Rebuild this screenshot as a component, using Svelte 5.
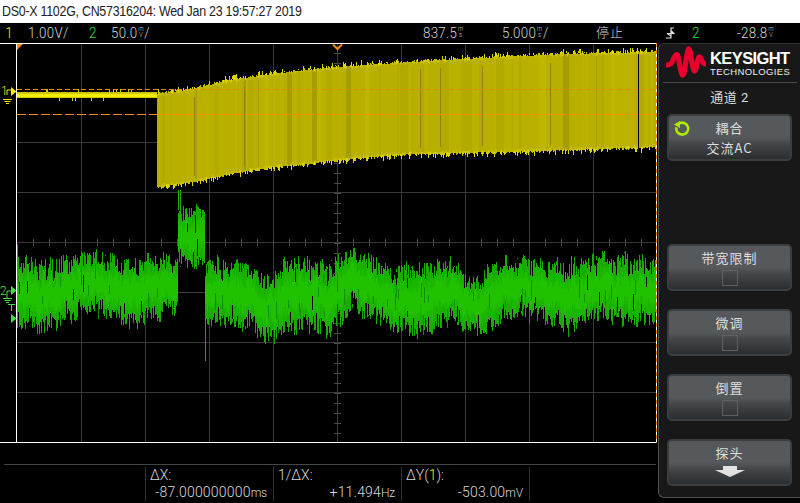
<script>
  function rng(seed) {
    let a = seed;
    return () => {
      a |= 0; a = (a + 0x6d2b79f5) | 0;
      let t = Math.imul(a ^ (a >>> 15), 1 | a);
      t = (t + Math.imul(t ^ (t >>> 7), 61 | t)) ^ t;
      return ((t ^ (t >>> 14)) >>> 0) / 4294967296;
    };
  }
  function interp(tbl, x) {
    for (let i = 1; i < tbl.length; i++) {
      if (x <= tbl[i][0]) {
        const [a, b] = tbl[i - 1], [c, d] = tbl[i];
        return b + ((d - b) * (x - a)) / (c - a);
      }
    }
    return tbl[tbl.length - 1][1];
  }
  const OFFSET = 43; // svg origin in page coordinates
  const seg = (x, y1, y2) => `M${x + 0.5} ${Math.round(y1) - OFFSET}V${Math.round(y2) - OFFSET}`;

  // ---- channel 1 (yellow burst) ----
  const yTop = [[157,92],[193,87],[230,78],[273,72],[307,68],[337,65],[383,62],[410,60],[500,55],[567,52],[657,50]];
  const yBot = [[157,188],[193,183],[230,175],[273,168],[307,165],[337,161],[383,157],[410,155],[500,153],[567,151],[657,148]];
  const r1 = rng(1234);
  const yShades = ['#b8af00', '#bbb200', '#b3aa00', '#bfb600', '#a69e00'];
  const yBuckets = yShades.map(() => '');
  let yEdge = '', yBright = '', yDark = '', yFlat = '', yFringe = '';
  let shade = 0;
  for (let x = 157; x < 657; x++) {
    if (r1() < 0.35) { const p = r1(); shade = p < 0.42 ? 0 : p < 0.68 ? 1 : p < 0.86 ? 2 : p < 0.96 ? 3 : 4; }
    const t = interp(yTop, x) + 2, b = interp(yBot, x) - 1;
    yBuckets[shade] += seg(x, t, b);
    if (r1() < 0.55) yEdge += seg(x, t - r1() * 2, t + 1 + r1() * 2);
    if (r1() < 0.55) yEdge += seg(x, b - 1 - r1() * 2, b + r1() * 2);
    if (r1() < 0.28) yBright += seg(x, t - 1 - r1() * 4, t - 1 + r1() * 3);
    if (r1() < 0.28) yBright += seg(x, b - r1() * 2, b + 1 + r1() * 4);
    if (r1() < 0.012) yDark += seg(x, t + 8, b - 6);
  }
  for (let x = 17; x < 157; x++) {
    const up = r1() < 0.07 ? 3 : 0, dn = r1() < 0.08 ? 3 : 0;
    yFringe += seg(x, 92 - up, 98 + dn);
    yFlat += seg(x, 94, 97);
  }
  const yGap = seg(638, 54, 148);

  // ---- channel 2 (green noise) ----
  const gTop = [[17,258],[45,262],[90,252],[130,262],[150,258],[178,258],[205,262],[250,262],[265,280],[290,258],[310,260],[330,265],[350,250],[370,255],[390,270],[420,265],[450,260],[470,280],[500,260],[520,258],[560,265],[600,255],[620,258],[657,260]];
  const gBot = [[17,324],[45,332],[90,310],[130,326],[150,318],[178,312],[205,322],[250,328],[265,343],[290,330],[310,330],[330,335],[350,310],[370,318],[390,330],[420,335],[450,320],[470,330],[480,338],[500,320],[520,315],[560,325],[570,335],[600,315],[620,325],[657,320]];
  const r2 = rng(77);
  let gOuter = '', gMid = '', gIn = '', gDeep = '', gCut = '';
  for (let x = 17; x < 657; x++) {
    const pulse = x >= 178 && x < 205;
    const wob = Math.sin(x * 0.37) * 2.5 + Math.sin(x * 0.83 + 1) * 2;
    const t = (pulse ? 204 : interp(gTop, x) - 3) + wob;
    const b = (pulse ? 270 : interp(gBot, x) + 3) + wob;
    const h = b - t;
    const tt = t + Math.pow(r2(), 1.6) * h * 0.34;
    const bb = b - Math.pow(r2(), 1.6) * h * 0.34;
    gOuter += seg(x, tt, bb);
    gMid += seg(x, t + h * (0.14 + r2() * 0.16), b - h * (0.14 + r2() * 0.16));
    gIn += seg(x, t + h * (0.26 + r2() * 0.14), b - h * (0.26 + r2() * 0.14));
    if (r2() < 0.07) { const y = t + h * (0.2 + r2() * 0.6); gDeep += seg(x, y, y + 6 + r2() * 14); }
    if (r2() < 0.035) { const y = tt + r2() * 4; gCut += seg(x, y, y + 6 + r2() * 12); }
    if (r2() < 0.035) { const y = bb - r2() * 4; gCut += seg(x, y - 6 - r2() * 12, y); }
  }
  gOuter += seg(178, 190, 210) + seg(180, 190, 210) + seg(205, 300, 361) + seg(17, 244, 262);

  // ---- graticule ----
  let grid = '', ticks = '';
  for (let x = 81; x < 657; x += 64) grid += `M${x + 0.5} 1V399`;
  for (let y = 92; y < 440; y += 50) grid += `M17 ${y - 43 + 0.5}H657`;
  for (let x = 33; x < 657; x += 16) ticks += `M${x + 0.5} ${242 - 43 - 3}V${242 - 43 + 4}`;
  for (let y = 53; y < 442; y += 10) ticks += `M334 ${y - 43 + 0.5}H341`;

  const softkeys = [
    { label: '带宽限制', kind: 'box' },
    { label: '微调', kind: 'box' },
    { label: '倒置', kind: 'box' },
    { label: '探头', kind: 'arrow' }
  ];
  const meas = [
    { head: ['ΔX:'], val: '-87.000000000', unit: 'ms' },
    { head: ['1/ΔX:'], val: '+11.494', unit: 'Hz' },
    { head: ['ΔY(', '1', '):'], val: '-503.00', unit: 'mV' }
  ];
</script>

<div class="screen">
  <header class="title"><span>DS0-X 1102G, CN57316204: Wed Jan 23 19:57:27 2019</span></header>

  <div class="status">
    <span class="cell sq yellow w-ch">1</span>
    <span class="cell sq w-scale">1.00V/</span>
    <span class="cell sq green w-ch2">2</span>
    <span class="cell sq w-scale2">50.0<span class="stack"><i>m</i><i>V</i></span>/</span>
    <span class="cell sq w-delay">837.5<span class="stack"><i>m</i><i>s</i></span></span>
    <span class="cell sq w-time">5.000<span class="stack"><i>m</i><i>s</i></span>/</span>
    <span class="cell w-run">停止</span>
    <span class="cell w-trig">
      <svg width="10" height="12" viewBox="0 0 10 12"><path d="M6 0.5V11.5M1 11H6M6 1H9M2 6.5H9L6 3.5M2 6.5L6 9" fill="none" stroke="#e0e0e0" stroke-width="1.2"/></svg>
    </span>
    <span class="cell sq green w-src">2</span>
    <span class="cell sq w-level">-28.8<span class="stack"><i>m</i><i>V</i></span></span>
  </div>

  <div class="body">
    <section class="scope">
      <svg class="plot" width="658" height="400" viewBox="0 0 658 400">
        <g shape-rendering="crispEdges" fill="none">
          <path d={grid} stroke="#3a3a3a" />
          <path d={ticks} stroke="#4a4a4a" />
          <path d={yFringe} stroke="#cfc700" />
          <path d={yFlat} stroke="#f5ec00" />
          {#each yBuckets as d, i}
            <path {d} stroke={yShades[i]} />
          {/each}
          <path d={yDark} stroke="#8c8500" />
          <path d={yEdge} stroke="#c6bd00" />
          <path d={yBright} stroke="#dcd300" />
          <path d={yGap} stroke="#000" />
          <path d="M17 46.5H657" stroke="#e08a10" stroke-dasharray="5 3" />
          <path d="M17 71.5H657" stroke="#ff8c00" stroke-dasharray="9 3" />
          <path d={gOuter} stroke="#18ac00" />
          <path d={gMid} stroke="#1bb600" />
          <path d={gIn} stroke="#20c200" />
          <path d={gDeep} stroke="#129000" />
          <path d={gCut} stroke="#000" />
          <path d="M0 0.5H657M0 399.5H657M16.5 0V400" stroke="#fff" />
          <path d="M656.5 0V400" stroke="#fff" />
          <path d="M656.5 0V400" stroke="#ff8c00" stroke-dasharray="4 3" />
        </g>

        <path d="M17 1H23L17 7Z" fill="#f08a1c" />
        <path d="M333 1.5L337.5 6L342 1.5" fill="none" stroke="#f08a1c" stroke-width="2" />

        <!-- channel 1 marker -->
        <text class="mk" x="1" y="52" fill="#f2ea00">1</text>
        <path d="M7 52V47H11" fill="none" stroke="#f2ea00" />
        <path d="M3 56.5H12M4.5 58.5H10.5M6 60.5H9" fill="none" stroke="#f2ea00" />
        <path d="M11 44L16.5 48.500L11 53Z" fill="#f2ea00" />

        <!-- channel 2 marker -->
        <text class="mk" x="0" y="252" fill="#3fe03f">2</text>
        <path d="M7 255V248H11" fill="none" stroke="#3fe03f" />
        <path d="M3 255.500H12M4.500 257.500H10.500M6 259.500H9" fill="none" stroke="#3fe03f" />
        <path d="M11 243L16.500 247.500L11 252Z" fill="#3fe03f" />
        <path d="M8 261.500H15M11.500 261.500V268" fill="none" stroke="#3fe03f" />
        <path d="M11 271L16.500 275.500L11 280Z" fill="#3fe03f" />
      </svg>

      <div class="meas">
        {#each meas as m}
          <div class="mcell">
            <div class="mhead">
              {#each m.head as h, i}<span class:yellow={i === 1}>{h}</span>{/each}
            </div>
            <div class="mval">{m.val}<span class="unit">{m.unit}</span></div>
          </div>
        {/each}
        <div class="mcell last"></div>
      </div>
    </section>

    <aside class="panel">
      <div class="logo">
        <svg width="40" height="34" viewBox="0 0 40 34">
          <path d="M1 19C4 19 6 17 7 14C8.500 10 10 8 11.500 9C13 11 14 26 16.500 29C19 30 20 8 22.500 3C25 2 26 24 28.500 25C30.500 25 31 13 33 11C35 10 36 18 39 18" fill="none" stroke="#e8002c" stroke-width="5.200" stroke-linejoin="round" stroke-linecap="round"/>
        </svg>
        <div class="brand">
          <div class="ks">KEYSIGHT</div>
          <div class="tech">TECHNOLOGIES</div>
        </div>
      </div>
      <div class="chan">通道 2</div>

      <div class="keys">
        <button class="key">
          <svg class="cycle" width="18" height="18" viewBox="0 0 18 18">
            <path d="M6.500 4.300A6 6 0 1 1 3.400 8.200" fill="none" stroke="#aeea00" stroke-width="2.600"/>
            <path d="M1 5.500L7 2V9Z" fill="#aeea00"/>
          </svg>
          <span>耦合</span>
          <span>交流AC</span>
        </button>
        <div class="key-slot"></div>
        {#each softkeys as k}
          <button class="key">
            <span>{k.label}</span>
            {#if k.kind === 'box'}
              <span class="box"></span>
            {:else}
              <svg class="arrow" width="30" height="11" viewBox="0 0 30 11"><path d="M8 0H22V4H30L15 11L0 4H8Z" fill="#e2e2e2"/></svg>
            {/if}
          </button>
        {/each}
      </div>
    </aside>
  </div>
</div>

<style>
  :global(body) { margin: 0; background: #000; }
  .screen {
    width: 800px; height: 503px; overflow: hidden; background: #000;
    display: flex; flex-direction: column;
    font-family: "Roboto", "Noto Sans CJK SC", sans-serif; color: #d8d8d8;
  }
  .title {
    height: 23px; flex: none; background: #fff; color: #222; box-sizing: border-box;
    padding-left: 2px; line-height: 23px;
    font-family: "Liberation Sans", sans-serif; font-size: 14px; letter-spacing: -0.300px; white-space: nowrap;
  }
  .title span { display: inline-block; transform: scaleX(0.888); transform-origin: left center; }
  .status {
    height: 20px; flex: none; display: flex; align-items: center;
    font-weight: 300; font-size: 15.500px; letter-spacing: 0.300px; color: #d4d4d4; white-space: nowrap;
  }
  .cell { flex: none; display: block; line-height: 20px; }
  .sq { transform: scaleX(0.86); transform-origin: left center; }
  .w-ch { width: 28px; padding-left: 6px; box-sizing: border-box; }
  .w-scale { width: 61px; }
  .w-ch2 { width: 22px; }
  .w-scale2 { width: 312px; }
  .w-delay { width: 79px; }
  .w-time { width: 94px; }
  .w-run { width: 69px; font-size: 13px; letter-spacing: 1px; }
  .w-trig { width: 27px; display: flex; align-items: center; }
  .w-src { width: 45px; }
  .w-level { width: 60px; }
  .yellow { color: #f2ea00; }
  .green { color: #2fe02f; }
  .stack {
    display: inline-flex; flex-direction: column; vertical-align: middle;
    font-size: 7px; line-height: 6.500px; letter-spacing: 0; width: 8px; align-items: center;
    margin-top: -3px;
  }
  .stack i { font-style: normal; display: block; height: 6.500px; }

  .body { flex: 1; display: flex; min-height: 0; }
  .scope { width: 658px; flex: none; display: flex; flex-direction: column; }
  .plot { display: block; flex: none; }
  .mk { font-family: "Roboto", sans-serif; font-weight: 300; font-size: 12px; }

  .meas {
    margin: 21px 2px 0 4px; border-top: 1px solid #444;
    padding: 2px 0 0 141px; display: flex; flex: 1;
    font-weight: 300; font-size: 14px; color: #d8d8d8;
  }
  .mcell {
    width: 128px; box-sizing: border-box; border-left: 1px solid #333;
    padding: 0 6px 0 4px; display: flex; flex-direction: column;
    height: 34px;
  }
  .mcell.last { width: 1px; padding: 0; }
  .mhead { font-size: 14px; line-height: 16px; }
  .mval { text-align: right; line-height: 18px; letter-spacing: 0.200px; white-space: nowrap; }
  .unit { font-size: 12px; letter-spacing: -0.200px; }

  .panel {
    width: 142px; flex: none; height: 455px; box-sizing: border-box;
    background: #181818; border-left: 1px solid #505050; border-bottom: 1px solid #505050;
    border-top: 1px solid #333; border-radius: 6px 0 0 6px;
    display: flex; flex-direction: column; align-items: center;
  }
  .logo {
    align-self: stretch; margin: 0 3px 0 4px; height: 39px; box-sizing: border-box;
    border-bottom: 1px solid #4a4a4a; display: flex; align-items: center; gap: 4px; padding-left: 3px;
  }
  .logo svg { flex: none; }
  .ks { font-family: "Liberation Sans", sans-serif; font-weight: 700; font-size: 16.500px; line-height: 17px; color: #fff; letter-spacing: -0.600px; }
  .tech { font-family: "Liberation Sans", sans-serif; font-size: 9.500px; line-height: 10px; color: #eee; letter-spacing: 0.400px; }
  .chan { font-size: 13px; letter-spacing: 0.500px; line-height: 30px; color: #ddd; margin-bottom: 1px; }
  .keys { display: flex; flex-direction: column; gap: 18px; }
  .key-slot { height: 47px; }
  .key {
    position: relative; width: 125px; height: 47px; box-sizing: border-box; padding: 2px 0 0;
    border: 2px solid #3b3e40; border-radius: 5px;
    background: linear-gradient(#56595b 0 50%, #43474a 65%, #2b2e31 100%);
    display: flex; flex-direction: column; align-items: center;
    font-family: "Noto Sans CJK SC", sans-serif; font-size: 13px; line-height: 20px; color: #dedede;
    letter-spacing: 1px;
  }
  .cycle { position: absolute; left: 4px; top: 3px; }
  .box { width: 14px; height: 14px; border: 1px solid #5e6163; margin-top: 2px; }
  .arrow { margin-top: 3px; }
</style>
